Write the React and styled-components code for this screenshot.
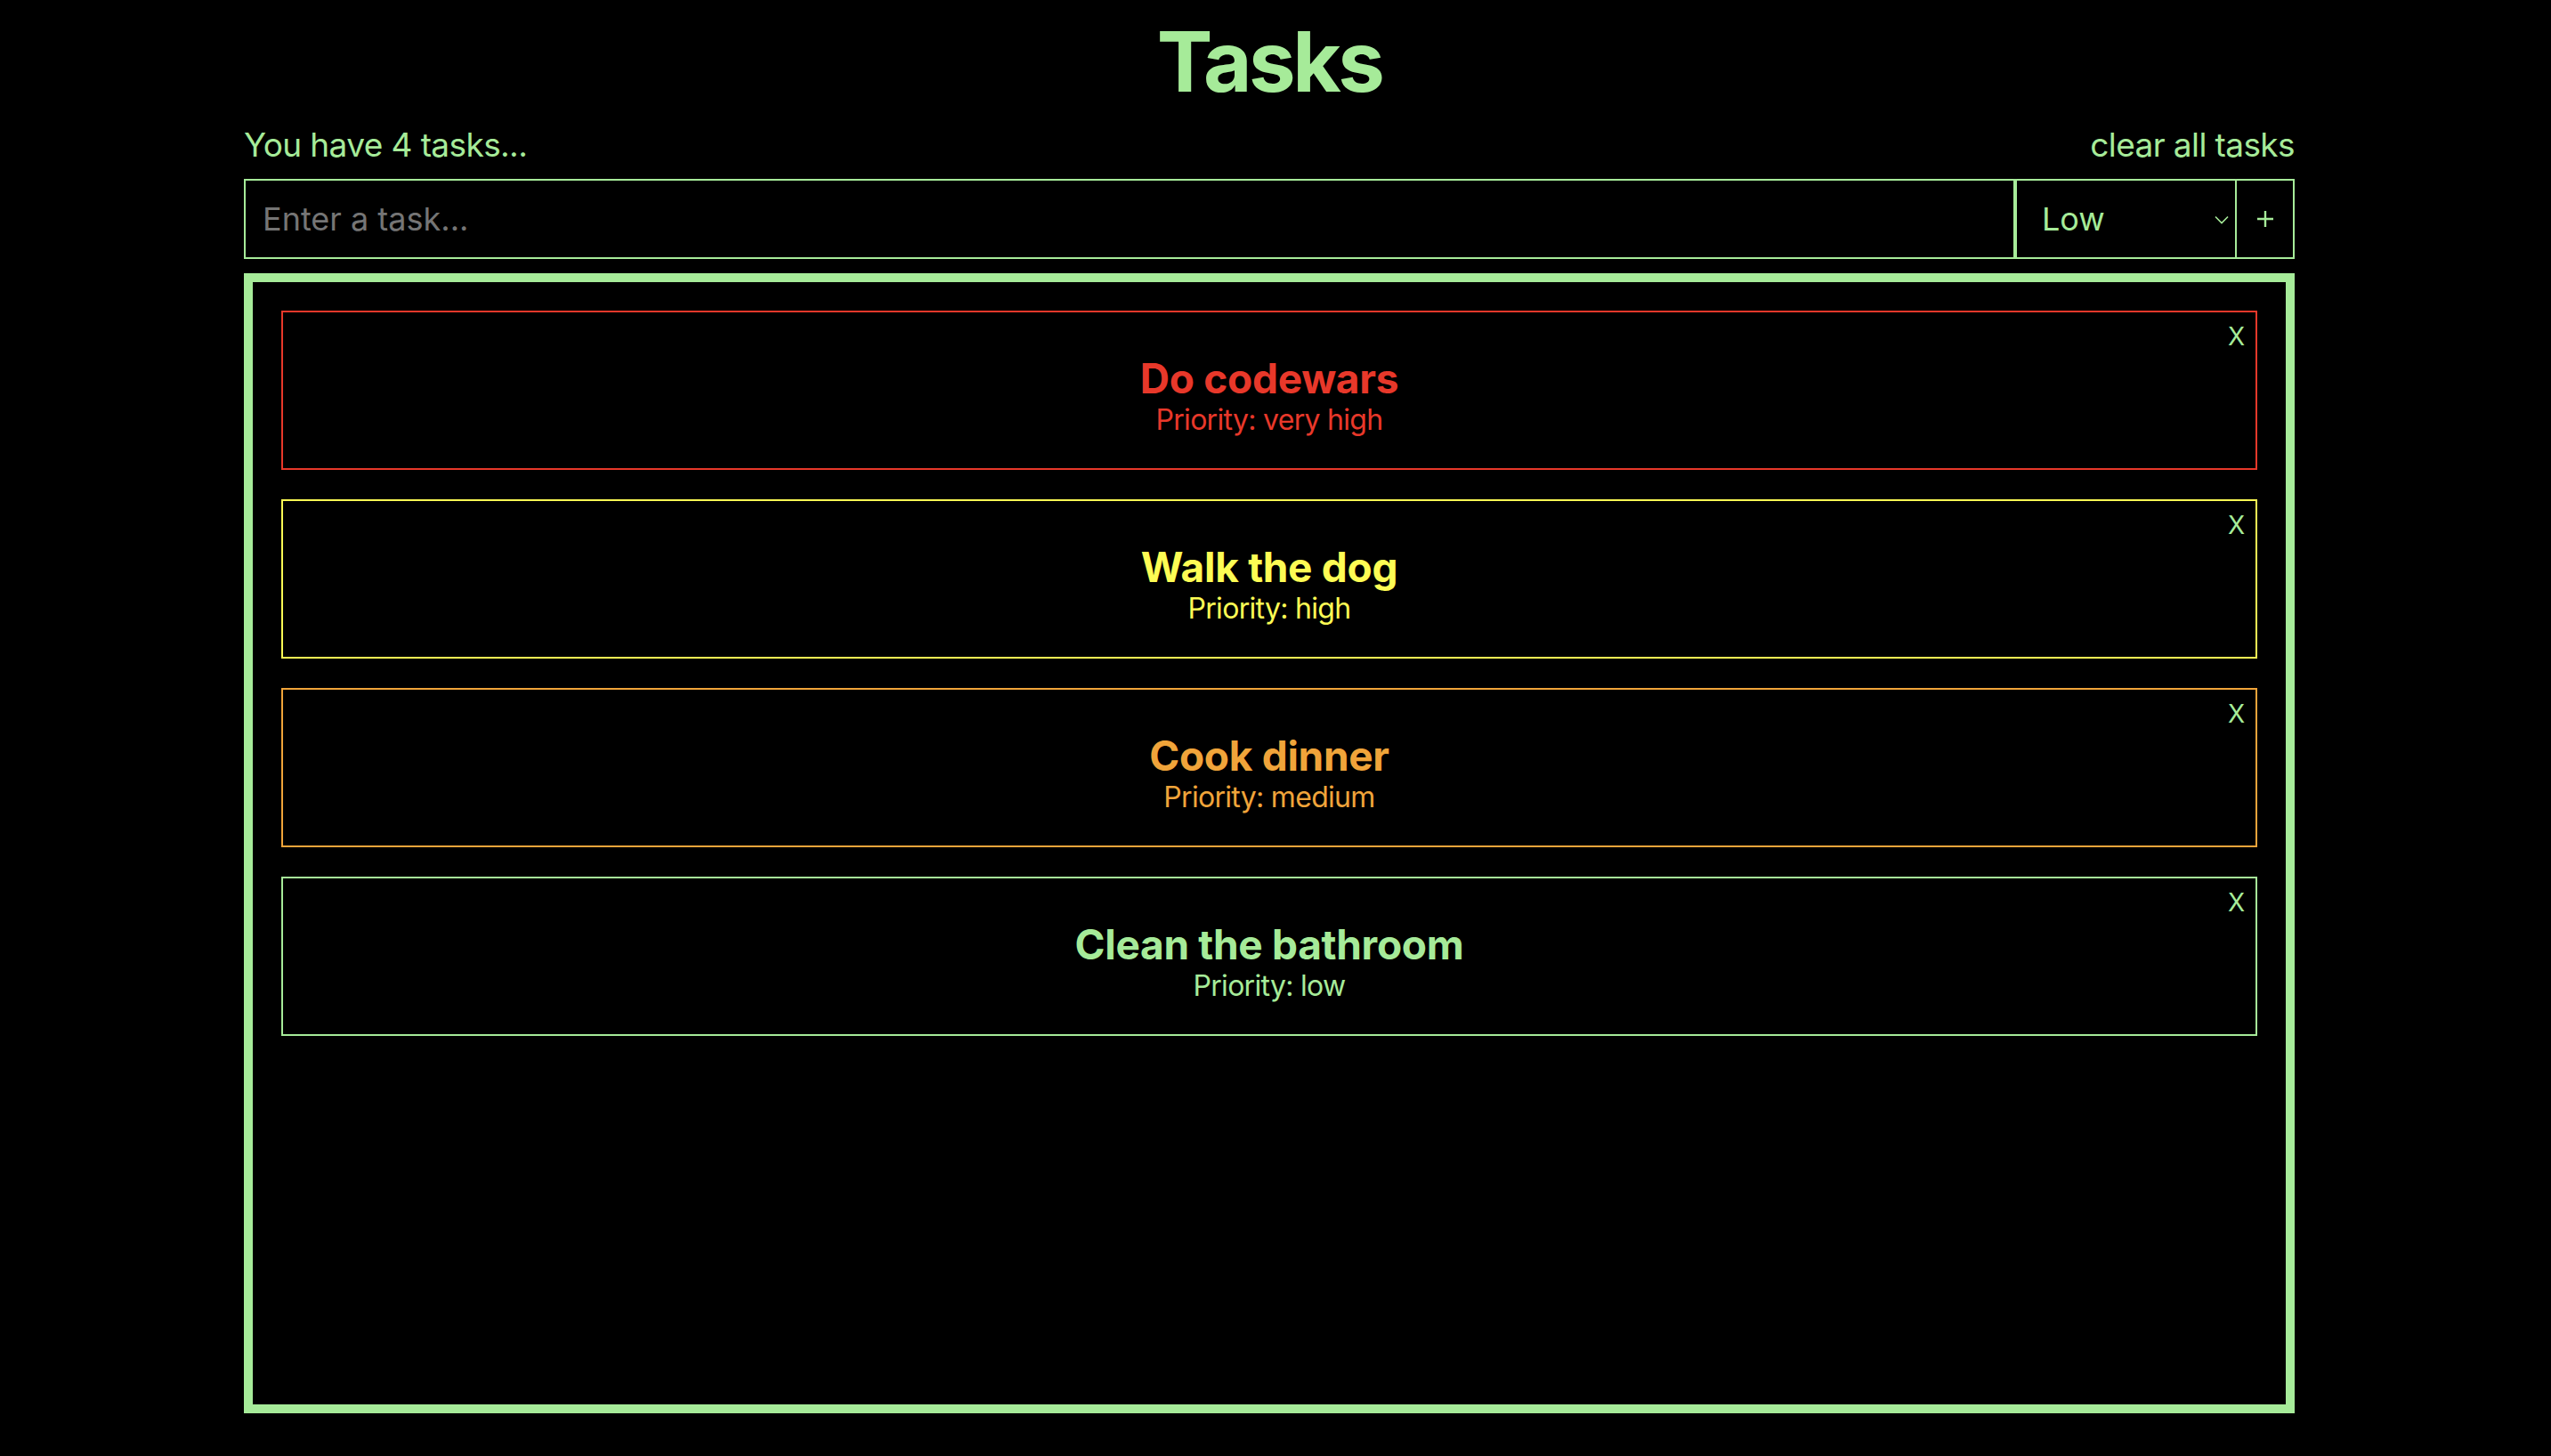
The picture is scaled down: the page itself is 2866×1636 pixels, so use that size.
import React from "react";
import styled, { createGlobalStyle } from "styled-components";

const GREEN = "#a6eb99";

const Global = createGlobalStyle`
  html, body { margin: 0; padding: 0; background: #000; }
  body { font-family: Inter, "Noto Sans", sans-serif; color: ${GREEN}; }
  * { box-sizing: border-box; }
`;

const Page = styled.div`
  display: flex;
  justify-content: center;
  padding-right: 14px;
  min-height: 1636px;
  background: #000;
`;

const Column = styled.main`
  width: 2304px;
  display: flex;
  flex-direction: column;
`;

const Title = styled.h1`
  margin: 22px 0 0;
  font-size: 94px;
  line-height: 94px;
  font-weight: 700;
  letter-spacing: -3.5px;
  text-align: center;
  color: ${GREEN};
`;

const InfoRow = styled.div`
  margin-top: 25px;
  height: 44px;
  display: flex;
  justify-content: space-between;
  align-items: center;
  font-size: 37px;
  line-height: 44px;
  letter-spacing: -0.6px;
`;

const InfoText = styled.span`
  color: ${GREEN};
`;

const ClearButton = styled.button`
  background: none;
  border: none;
  padding: 0;
  font: inherit;
  letter-spacing: inherit;
  color: ${GREEN};
  cursor: pointer;
`;

const Form = styled.form`
  margin-top: 16px;
  height: 90px;
  display: flex;
`;

const TaskInput = styled.input`
  flex: 1;
  min-width: 0;
  height: 100%;
  background: #000;
  border: 2px solid ${GREEN};
  padding: 0 19px;
  font-family: Inter, sans-serif;
  font-size: 36px;
  color: ${GREEN};
  outline: none;
  &::placeholder { color: #757575; }
`;

const SelectWrap = styled.div`
  position: relative;
  width: 249px;
  height: 100%;
`;

const Select = styled.select`
  appearance: none;
  width: 100%;
  height: 100%;
  background: #000;
  border: 2px solid ${GREEN};
  padding: 0 0 0 28px;
  font-family: Inter, sans-serif;
  font-size: 36px;
  color: ${GREEN};
  outline: none;
`;

const Chevron = styled.svg`
  position: absolute;
  right: 9px;
  top: 41px;
  width: 16px;
  height: 10px;
  pointer-events: none;
`;

const AddButton = styled.button`
  width: 65px;
  height: 100%;
  background: #000;
  border: 2px solid ${GREEN};
  border-left: none;
  color: ${GREEN};
  display: flex;
  align-items: center;
  justify-content: center;
  padding: 0;
  cursor: pointer;
`;

const PlusIcon = styled.svg`
  width: 18px;
  height: 18px;
`;

const Board = styled.section`
  margin-top: 16px;
  height: 1281px;
  border: 10px solid ${GREEN};
  padding: 32px;
  display: flex;
  flex-direction: column;
  gap: 33px;
`;

const Card = styled.article`
  position: relative;
  height: 179px;
  border: 2px solid ${(p) => p.$color};
  color: ${(p) => p.$color};
  display: flex;
  flex-direction: column;
  align-items: center;
  padding-top: 47px;
`;

const CardTitle = styled.h3`
  margin: 0;
  font-size: 46px;
  line-height: 55px;
  font-weight: 700;
  letter-spacing: -0.3px;
`;

const CardPriority = styled.p`
  margin: 0;
  font-size: 32px;
  line-height: 38px;
  font-weight: 400;
  letter-spacing: -0.7px;
`;

const RemoveButton = styled.button`
  position: absolute;
  top: 10px;
  right: 12px;
  background: none;
  border: none;
  padding: 0;
  font-family: Inter, sans-serif;
  font-size: 28px;
  font-weight: 400;
  line-height: 34px;
  color: ${GREEN};
  cursor: pointer;
`;

const tasks = [
  { title: "Do codewars", priority: "very high", color: "#e8382a" },
  { title: "Walk the dog", priority: "high", color: "#fdfc54" },
  { title: "Cook dinner", priority: "medium", color: "#f0a43a" },
  { title: "Clean the bathroom", priority: "low", color: GREEN },
];

export default function App() {
  return (
    <Page>
      <Global />
      <Column>
        <Title>Tasks</Title>
        <InfoRow>
          <InfoText>You have {tasks.length} tasks...</InfoText>
          <ClearButton type="button">clear all tasks</ClearButton>
        </InfoRow>
        <Form onSubmit={(e) => e.preventDefault()}>
          <TaskInput placeholder="Enter a task..." />
          <SelectWrap>
            <Select defaultValue="low">
              <option value="low">Low</option>
              <option value="medium">Medium</option>
              <option value="high">High</option>
              <option value="very high">Very high</option>
            </Select>
            <Chevron viewBox="0 0 16 10" fill="none">
              <path d="M1 1.5 L8 8.5 L15 1.5" stroke={GREEN} strokeWidth="1.6" />
            </Chevron>
          </SelectWrap>
          <AddButton type="submit" aria-label="Add task">
            <PlusIcon viewBox="0 0 18 18" fill="none">
              <path d="M9 0 V18 M0 9 H18" stroke={GREEN} strokeWidth="2.4" />
            </PlusIcon>
          </AddButton>
        </Form>
        <Board>
          {tasks.map((t) => (
            <Card key={t.title} $color={t.color}>
              <RemoveButton type="button">X</RemoveButton>
              <CardTitle>{t.title}</CardTitle>
              <CardPriority>Priority: {t.priority}</CardPriority>
            </Card>
          ))}
        </Board>
      </Column>
    </Page>
  );
}
